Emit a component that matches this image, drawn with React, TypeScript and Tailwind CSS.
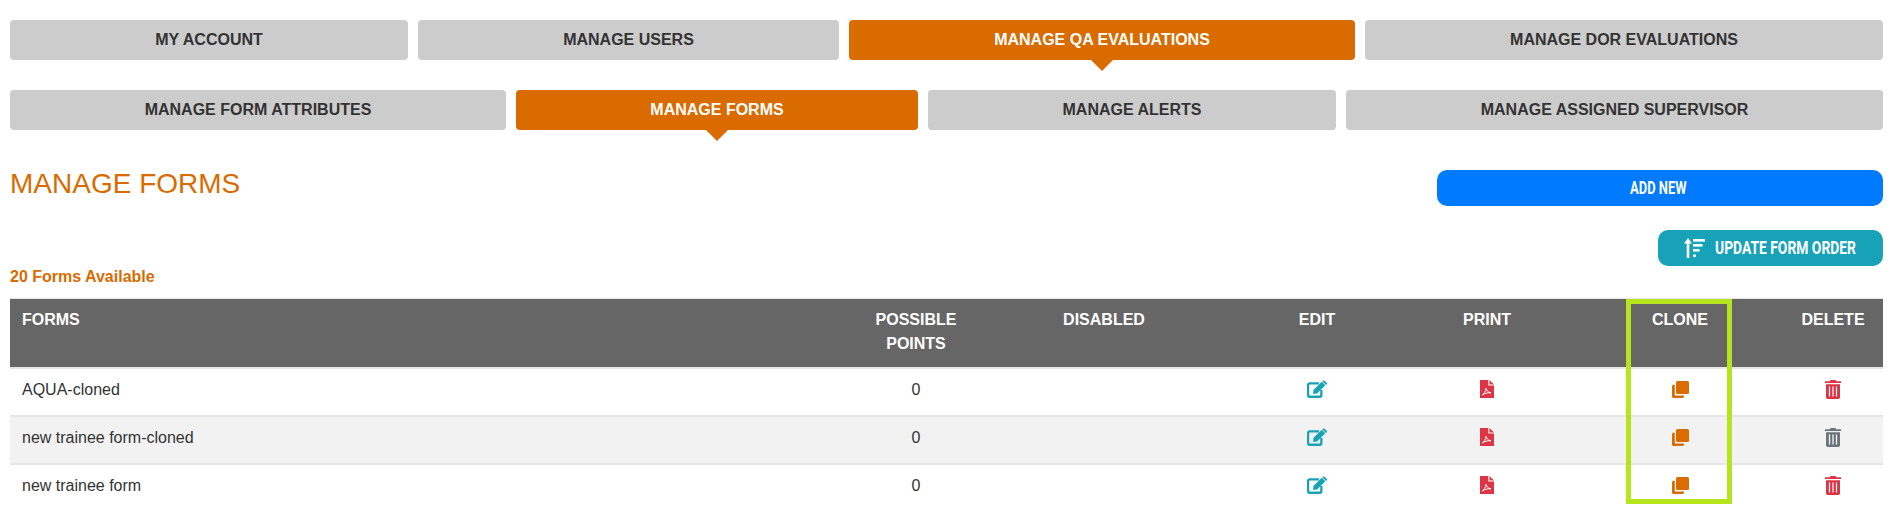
const nav1 = [
  { label: "MY ACCOUNT", w: "w-[398px]" },
  { label: "MANAGE USERS", w: "w-[421px]" },
  { label: "MANAGE QA EVALUATIONS", w: "w-[506px]", active: true },
  { label: "MANAGE DOR EVALUATIONS", w: "flex-1" },
];
const nav2 = [
  { label: "MANAGE FORM ATTRIBUTES", w: "w-[496px]" },
  { label: "MANAGE FORMS", w: "w-[402px]", active: true },
  { label: "MANAGE ALERTS", w: "w-[408px]" },
  { label: "MANAGE ASSIGNED SUPERVISOR", w: "flex-1" },
];

function Tab({ label, w, active }: { label: string; w: string; active?: boolean }) {
  return (
    <div
      className={`relative ${w} h-10 rounded-[4px] flex items-center justify-center pb-[1px] text-base font-bold ${
        active ? "bg-[#d96b00] text-white" : "bg-[#cccccc] text-[#333333]"
      }`}
    >
      {label}
      {active && (
        <span className="absolute top-full left-1/2 -ml-[11px] w-0 h-0 border-x-[11px] border-x-transparent border-t-[11px] border-t-[#d96b00]" />
      )}
    </div>
  );
}

function EditIcon() {
  return (
    <svg width="21" height="18" viewBox="0 0 21 18" fill="#17a2b8">
      <path d="M2.5 2.2h9.500v2.300H2.800a.6.6 0 0 0-.6.6v9.800c0 .4.200.6.600.6h9.800c.4 0 .6-.2.6-.6V10h2.300v5.600c0 1.300-1 2.400-2.400 2.400H2.500C1.100 18 0 16.900 0 15.600V4.600c0-1.300 1.100-2.400 2.500-2.400z" />
      <path d="M6.500 9.800 14.800 1.700l3.500 3.500-8.200 8.200-4 .5z" />
      <path d="M15.800 .8c.5-.5 1.300-.5 1.800 0l2 2c.5.5.5 1.300 0 1.800l-.5.500-3.600-3.600z" />
    </svg>
  );
}

function PdfIcon() {
  return (
    <svg width="14" height="18" viewBox="0 0 14 18" fill="#dc3545">
      <path d="M0 0h8.300v5.500H14V18H0z" />
      <path d="M9.500 0 14 4.400H9.500z" />
      <path d="M2.300 14.800c1.800-.9 3-3 3.700-6.300.8 2.500 2.200 3.900 5 4.300-3-.2-6 .3-8.700 2z" fill="none" stroke="#ffffff" strokeWidth="1" />
    </svg>
  );
}

function CloneIcon() {
  return (
    <svg width="17" height="17" viewBox="0 0 17 17" fill="#d96b00">
      <rect x="4" y="0" width="13" height="13" rx="1.500" />
      <path d="M2.800 3.800v10c0 .5.400.8.800.8H12v.9c0 .8-.7 1.500-1.500 1.500h-9C.7 17 0 16.300 0 15.500V5.300c0-.8.700-1.500 1.500-1.500z" />
    </svg>
  );
}

function TrashIcon({ color }: { color: string }) {
  return (
    <svg width="16" height="19" viewBox="0 0 16 19" fill={color}>
      <path d="M5.500 0h5l.7 1.300H16v1.700H0V1.300h4.800z" />
      <path d="M1 4.300h14v13c0 1-.7 1.700-1.700 1.700H2.700C1.700 19 1 18.300 1 17.300z" />
      <path d="M4.500 6.500v10M8 6.500v10M11.500 6.500v10" stroke="#ffffff" strokeWidth="1.200" fill="none" />
    </svg>
  );
}

function SortIcon() {
  return (
    <svg width="21" height="20" viewBox="0 0 21 20" fill="#ffffff" className="shrink-0">
      <path d="M4 0 8 5.500H5.300V20H2.700V5.500H0z" />
      <rect x="9" y="1" width="12" height="2.600" />
      <rect x="9" y="6" width="9.500" height="2.600" />
      <rect x="9" y="11" width="6.500" height="2.600" />
      <rect x="9" y="16.500" width="3" height="2.600" />
    </svg>
  );
}

const rows = [
  { name: "AQUA-cloned", trash: "#dc3545" },
  { name: "new trainee form-cloned", trash: "#6c757d" },
  { name: "new trainee form", trash: "#dc3545" },
];

export default function App() {
  return (
    <div className="relative h-[509px] w-[1895px] overflow-hidden bg-white pl-[10px] pr-3 pt-5 font-['Liberation_Sans',Arial,sans-serif] text-[#333333]">
      <div className="flex gap-[10px]">
        {nav1.map((t) => (
          <Tab key={t.label} {...t} />
        ))}
      </div>
      <div className="mt-[30px] flex gap-[10px]">
        {nav2.map((t) => (
          <Tab key={t.label} {...t} />
        ))}
      </div>

      <div className="mt-10 flex justify-between">
        <h1 className="text-[28px] leading-7 text-[#d96b00]">MANAGE FORMS</h1>
        <div className="flex flex-col items-end gap-6 font-['Roboto',sans-serif]">
          <div className="flex h-9 w-[446px] items-center justify-center rounded-[10px] bg-[#007bff] text-lg font-bold text-white">
            <span className="inline-block w-[60px] origin-left scale-x-[0.72] whitespace-nowrap">ADD NEW</span>
          </div>
          <div className="flex h-9 w-[225px] items-center gap-[10px] rounded-[10px] bg-[#17a2b8] pl-[26px] text-lg font-bold text-white">
            <SortIcon />
            <span className="inline-block w-[142px] shrink-0 origin-left scale-x-[0.77] whitespace-nowrap">UPDATE FORM ORDER</span>
          </div>
        </div>
      </div>

      <div className="mt-[1px] text-base font-bold leading-5 text-[#d96b00]">20 Forms Available</div>

      <table className="mt-[11px] w-full table-fixed border-collapse text-base">
        <thead>
          <tr className="h-[69px] border-t border-b-2 border-[#e5e5e5] bg-[#666666] align-top font-bold leading-6 text-white">
            <th className="w-[851px] pl-3 pt-[9px] text-left font-bold">FORMS</th>
            <th className="w-[110px] pt-[9px] text-center font-bold">POSSIBLE<br />POINTS</th>
            <th className="w-[266px] pt-[9px] text-center font-bold">DISABLED</th>
            <th className="w-[160px] pt-[9px] text-center font-bold">EDIT</th>
            <th className="w-[180px] pt-[9px] text-center font-bold">PRINT</th>
            <th className="w-[206px] pt-[9px] text-center font-bold">CLONE</th>
            <th className="pt-[9px] text-center font-bold">DELETE</th>
          </tr>
        </thead>
        <tbody>
          {rows.map((r, i) => (
            <tr key={r.name} className={`h-12 border-b-2 border-[#e5e5e5] ${i === 1 ? "bg-[#f2f2f2]" : "bg-white"}`}>
              <td className="pb-[3px] pl-3">{r.name}</td>
              <td className="pb-[3px] text-center">0</td>
              <td />
              <td className="pb-[5px]"><div className="flex justify-center"><EditIcon /></div></td>
              <td className="pb-[5px]"><div className="flex justify-center"><PdfIcon /></div></td>
              <td className="pb-[5px]"><div className="flex justify-center"><CloneIcon /></div></td>
              <td className="pb-[5px]"><div className="flex justify-center"><TrashIcon color={r.trash} /></div></td>
            </tr>
          ))}
        </tbody>
      </table>

      <div className="absolute left-[1626px] top-[299px] h-[205px] w-[106px] border-[5px] border-[#b5e61d]" />
    </div>
  );
}
